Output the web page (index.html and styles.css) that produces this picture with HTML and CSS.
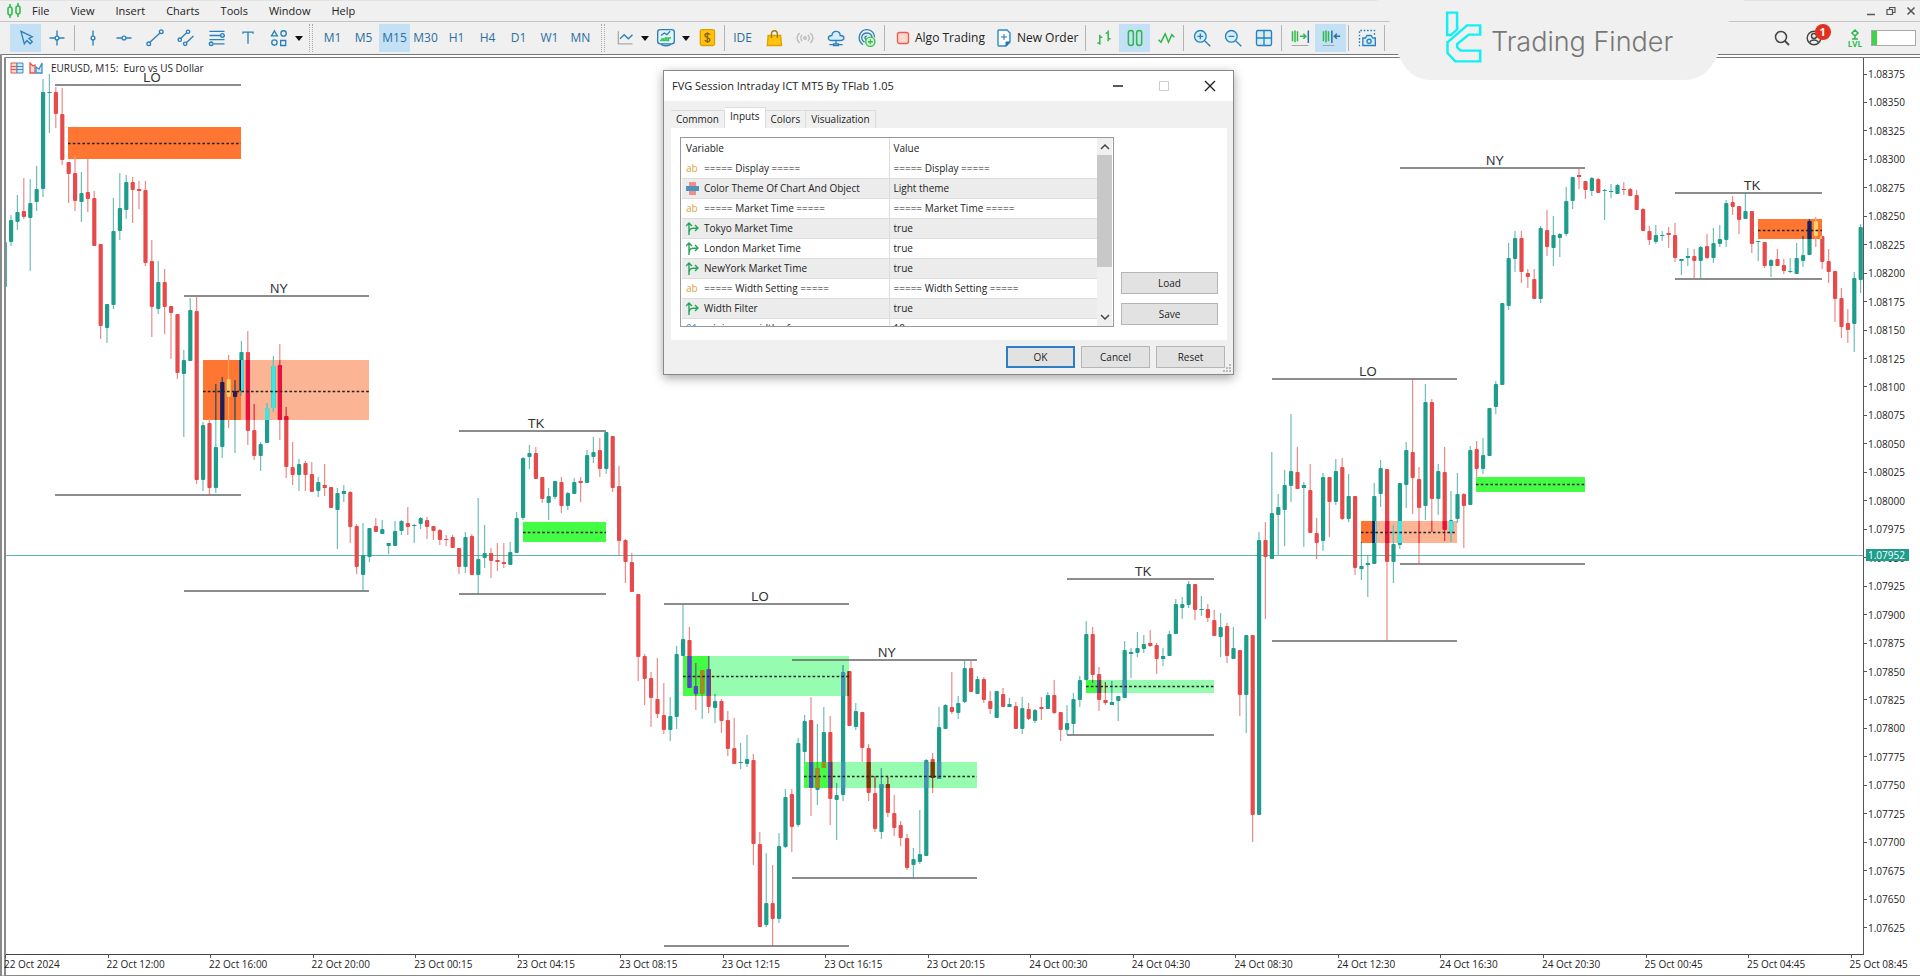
FILE: index.html
```html
<!DOCTYPE html>
<html lang="en">
<head>
<meta charset="utf-8">
<title>EURUSD, M15 - Trading terminal</title>
<link rel="stylesheet" href="styles.css">
</head>
<body>
<header class="top">
  <nav class="menubar">
    <svg class="app-icon" width="16" height="16" viewBox="0 0 16 16"><g fill="none" stroke="#2fc04b" stroke-width="1.6"><path d="M4 1v3M4 12v3M12 0v3M12 11v3"/><rect x="2" y="4" width="4" height="8" rx="2"/><rect x="10" y="3" width="4" height="8" rx="2"/></g></svg>
    <button class="menu">File</button><button class="menu">View</button><button class="menu">Insert</button><button class="menu">Charts</button><button class="menu">Tools</button><button class="menu">Window</button><button class="menu">Help</button>
    <div class="win-controls">
      <button aria-label="Minimize"><svg width="10" height="10" viewBox="0 0 10 10"><path d="M1 8.500h8" stroke="#555" stroke-width="1.500"/></svg></button>
      <button aria-label="Restore"><svg width="10" height="10" viewBox="0 0 10 10"><path d="M1 3.500h5.500v5H1zM3.500 3.500v-2H9v5H6.500" fill="none" stroke="#555" stroke-width="1.200"/></svg></button>
      <button aria-label="Close"><svg width="10" height="10" viewBox="0 0 10 10"><path d="M1.500 1.500l7 7M8.500 1.500l-7 7" stroke="#555" stroke-width="1.500"/></svg></button>
    </div>
  </nav>
  <div class="toolbar">
    <button class="tool on" aria-label="Cursor"><svg class="ic" viewBox="0 0 24 24"><path d="M6 4l4 15 3-4 4 4 2.500-2.500-4-4 4-2z"/></svg></button>
    <button class="tool" aria-label="Crosshair"><svg class="ic" viewBox="0 0 24 24"><path d="M12 3v6.500M12 14.500V21M3 12h6.500M14.500 12H21"/><circle cx="12" cy="12" r="2.300"/></svg></button>
    <span class="sep"></span>
    <button class="tool" aria-label="Vertical line"><svg class="ic" viewBox="0 0 24 24"><path d="M12 3v6.500M12 14.500V21"/><circle cx="12" cy="12" r="2.300"/></svg></button>
    <button class="tool" aria-label="Horizontal line"><svg class="ic" viewBox="0 0 24 24"><path d="M3 12h6.500M14.500 12H21"/><circle cx="12" cy="12" r="2.300"/></svg></button>
    <button class="tool" aria-label="Trendline"><svg class="ic" viewBox="0 0 24 24"><path d="M5.500 17.500L18 6"/><circle cx="4.500" cy="19" r="2.200"/><circle cx="19.500" cy="4.500" r="2.200"/></svg></button>
    <button class="tool" aria-label="Equidistant channel"><svg class="ic" viewBox="0 0 24 24"><path d="M5.500 12.500L13 5.500M12 18l9-8.500"/><circle cx="4.500" cy="14" r="2"/><circle cx="14.500" cy="4.500" r="2"/><circle cx="11" cy="19" r="2"/></svg></button>
    <button class="tool" aria-label="Fibonacci retracement"><svg class="ic" viewBox="0 0 24 24"><path d="M3 4h18M3 9h13M3 14h18M8 19h13"/><circle cx="18.500" cy="9" r="2.200" fill="#b9e2f7"/><circle cx="5" cy="19" r="2.200" fill="#b9e2f7"/></svg></button>
    <button class="tool" aria-label="Text"><svg class="ic" viewBox="0 0 24 24"><path d="M6 7V5h12v2M12 5v14"/></svg></button>
    <button class="tool" aria-label="Shapes"><svg class="ic" viewBox="0 0 24 24"><path d="M3 9.500L6.500 3.500 10 9.500zM14 15h6v6h-6z"/><circle cx="17.500" cy="6.500" r="3.200"/><circle cx="6.500" cy="17.500" r="3.200"/></svg></button>
    <button class="drop" aria-label="More shapes"></button>
    <span class="grip"></span>
    <button class="tool tf">M1</button><button class="tool tf">M5</button><button class="tool tf on">M15</button><button class="tool tf">M30</button><button class="tool tf">H1</button><button class="tool tf">H4</button><button class="tool tf">D1</button><button class="tool tf">W1</button><button class="tool tf">MN</button>
    <span class="grip"></span>
    <button class="tool" aria-label="Line studies"><svg class="ic" viewBox="0 0 24 24"><path d="M4 4v15h17" stroke="#aaa"/><path d="M6 13l5-5 5 5 5-5"/></svg></button>
    <button class="drop" aria-label="Chart types"></button>
    <button class="tool" aria-label="Indicators"><svg class="ic" viewBox="0 0 24 24"><rect x="2" y="2" width="20" height="17" rx="3" fill="#e4f4fc"/><path d="M6 19c2 3 10 3 12 0M6 9l4-3 3 2 4-4"/><path d="M5 15h2v-2h2v2h2v-3h2v3h2v-3h3" stroke="#2fc04b"/></svg></button>
    <button class="drop" aria-label="Indicator list"></button>
    <button class="tool" aria-label="Depth of market"><svg class="ic" viewBox="0 0 24 24"><rect x="4" y="2" width="17" height="19" rx="2" fill="#ffc30f" stroke="#dda000"/><path d="M15.500 8c-1-2-6-2-6 1s6 2 6 5-5 3-6 .5M12.500 5v13" stroke="#8a6500"/></svg></button>
    <span class="sep"></span>
    <button class="tool tf">IDE</button>
    <button class="tool" aria-label="Market"><svg class="ic" viewBox="0 0 24 24"><path d="M5 9h15l1 12H4z" fill="#ffc30f" stroke="#dda000"/><path d="M9 12V7c0-5 7-5 7 0v5" stroke="#a67a00"/></svg></button>
    <button class="tool" aria-label="Signals"><svg class="ic" viewBox="0 0 24 24"><g stroke="#bbb"><circle cx="12" cy="12" r="1.500"/><path d="M8.500 8.500c-2 2-2 5 0 7M15.500 8.500c2 2 2 5 0 7M5.500 6c-4 4-4 8 0 12M18.500 6c4 4 4 8 0 12"/></g></svg></button>
    <button class="tool" aria-label="Cloud hosting"><svg class="ic" viewBox="0 0 24 24"><path d="M7 15c-6 0-5-6 0-6 1-7 10-6 10 0 6 0 6 6 0 6z" fill="#d4effb"/><path d="M12 15v4M4 20h5M14 20h6M9 19h6v2H9z"/></svg></button>
    <button class="tool" aria-label="Copy trading"><svg class="ic" viewBox="0 0 24 24"><path d="M7 20C-1 14 3 2 12 2c6 0 9 5 9 9M9 17c-6-4-3-11 3-11 4 0 6 3 6 5M11 14c-3-2-1-5 1-4"/><circle cx="16" cy="16.500" r="5.500" fill="#d8f8d8" stroke="#2fc04b"/><path d="M16 13.500v6M13 16.500h6" stroke="#2fc04b"/></svg></button>
    <span class="sep"></span>
    <button class="tool wide"><svg width="14" height="16" viewBox="0 0 14 16"><rect x="1.500" y="2.500" width="11" height="11" rx="2" fill="#ffd6d0" stroke="#e5604c" stroke-width="1.400"/></svg>Algo Trading</button>
    <button class="tool wide"><svg width="16" height="20" viewBox="0 0 16 20"><path d="M3 2h8l3 3v9l-4 4H3c-1 0-1-1-1-1V3c0-1 1-1 1-1z" fill="#fff" stroke="#2b8ac9" stroke-width="1.400"/><path d="M8 6v6M5 9h6M10 18v-4h4z" fill="#1c72b4" stroke="#1c72b4"/></svg>New Order</button>
    <span class="sep"></span>
    <button class="tool" aria-label="Bar chart"><svg class="ic green" viewBox="0 0 24 24"><path d="M7 8v12M4 18h3M7 11h3M17 3v13M14 6h3M17 13h3"/></svg></button>
    <button class="tool on" aria-label="Candlesticks"><svg class="ic green" viewBox="0 0 24 24"><rect x="4" y="3" width="6" height="18" rx="3"/><rect x="14" y="3" width="6" height="18" rx="3"/></svg></button>
    <button class="tool" aria-label="Line chart"><svg class="ic green" viewBox="0 0 24 24"><path d="M3 14l3 3 5-10 4 10 4-9 3 3"/></svg></button>
    <span class="sep"></span>
    <button class="tool" aria-label="Zoom in"><svg class="ic" viewBox="0 0 24 24"><circle cx="10" cy="10" r="7" fill="#d4effb"/><path d="M15.500 15.500L22 22M10 6.500v7M6.500 10h7"/></svg></button>
    <button class="tool" aria-label="Zoom out"><svg class="ic" viewBox="0 0 24 24"><circle cx="10" cy="10" r="7" fill="#d4effb"/><path d="M15.500 15.500L22 22M6.500 10h7"/></svg></button>
    <button class="tool" aria-label="Tile windows"><svg class="ic" viewBox="0 0 24 24"><rect x="3" y="3" width="18" height="18" rx="2" fill="#d4effb"/><path d="M12 3v18M3 12h18"/></svg></button>
    <span class="sep"></span>
    <button class="tool" aria-label="Auto scroll"><svg class="ic green" viewBox="0 0 24 24"><path d="M3 4v12M6 3v14M9 4v12M12 10h6M16 7l3 3-3 3"/><path d="M22 3v15" stroke="#2b6fa9"/><path d="M2 21h20" stroke="#999" stroke-width="1"/></svg></button>
    <button class="tool on" aria-label="Chart shift"><svg class="ic green" viewBox="0 0 24 24"><path d="M3 4v12M6 3v14M9 4v12"/><path d="M13 3v15M23 10h-7M19 7l-3 3 3 3" stroke="#2b6fa9"/><path d="M2 21h14" stroke="#999" stroke-width="1"/></svg></button>
    <span class="sep"></span>
    <button class="tool" aria-label="Screenshot"><svg class="ic" viewBox="0 0 24 24"><path d="M3 22V3h18v5" stroke-dasharray="2 2"/><path d="M7 12h3l2-3h5l2 3h3v9H7z" fill="#d4effb"/><circle cx="14.500" cy="16" r="2.500"/></svg></button>
    <span class="sep end"></span>
    <div class="status">
      <button aria-label="Search"><svg width="18" height="18" viewBox="0 0 18 18"><path d="M11.500 11.500L16 16" stroke="#444" stroke-width="1.800"/><circle cx="8" cy="8" r="5.500" fill="none" stroke="#444" stroke-width="1.500"/></svg></button>
      <button class="user" aria-label="Notifications"><svg width="18" height="18" viewBox="0 0 18 18"><g fill="none" stroke="#444" stroke-width="1.400"><circle cx="9" cy="9" r="6.800"/><circle cx="9" cy="7" r="2.500"/><path d="M4.500 14c1-4 8-4 9 0"/></g></svg><span class="badge">1</span></button>
      <span class="lvl"><svg width="10" height="11" viewBox="0 0 10 11"><path d="M5 1l3 3-3 3-3-3zM5 7v3M2 10h6" fill="none" stroke="#2fb84b" stroke-width="1.500"/></svg>LVL</span>
      <span class="battery"></span>
    </div>
  </div>
  <div class="brand">
    <svg class="brand-bg" viewBox="0 0 372 80" preserveAspectRatio="none"><path d="M0 0H372C354 4 354 32 344 54Q333 80 310 80H56Q34 80 24 58C14 38 16 4 0 0z" fill="#f0f0f0"/></svg>
    <svg class="brand-mark" viewBox="236 34 104 156" preserveAspectRatio="none"><path d="M242 108V39H270V88M243 128L298 77H335V105H303L270 133V143L280 153H335V185H265L243 160V124M239 106L252 106L272 88" fill="none" stroke="#12f0f5" stroke-width="7"/></svg>
    <span class="brand-name">Trading Finder</span>
  </div>
</header>

<main class="chart">
  <div class="plot">
    <svg id="candles" viewBox="6 58 1857 896" role="img" aria-label="EURUSD 15 minute candles"></svg>
    <div class="caption">
      <svg width="38" height="12" viewBox="0 0 38 12"><path d="M1 1h6v10H1z" fill="#ffd9d6" stroke="#e5574c"/><path d="M7 1h6v10H7z" fill="#d4ebfa" stroke="#3b8fd0"/><path d="M1 4.500h6M1 7.500h6" stroke="#e5574c"/><path d="M7 4.500h6M7 7.500h6" stroke="#3b8fd0"/><path d="M20 1l3 3 2-1v8h-5z" fill="#ffd9d6" stroke="#e5574c" stroke-width="1.300"/><path d="M26 5l3 2 3-6v10h-6z" fill="#d4ebfa" stroke="#3b8fd0" stroke-width="1.300"/></svg>
      <span>EURUSD, M15:&nbsp; Euro vs US Dollar</span>
    </div>
  </div>
  <div class="prices"><div class="price-list" id="prices"></div><span class="tag">1.07952</span></div>
  <div class="times" id="times"></div>
</main>

<section class="dialog" role="dialog" aria-label="FVG Session Intraday ICT MT5 By TFlab 1.05">
  <div class="titlebar">
    <h1>FVG Session Intraday ICT MT5 By TFlab 1.05</h1>
    <button aria-label="Minimize"><svg width="12" height="12" viewBox="0 0 12 12"><path d="M1 6h10" stroke="#222" stroke-width="1.500"/></svg></button>
    <button aria-label="Maximize" disabled><svg width="12" height="12" viewBox="0 0 12 12"><path d="M1.500 1.500h9v9h-9z" fill="none" stroke="#ccc"/></svg></button>
    <button aria-label="Close"><svg width="12" height="12" viewBox="0 0 12 12"><path d="M1 1l10 10M11 1L1 11" stroke="#222" stroke-width="1.400"/></svg></button>
  </div>
  <div class="tabs"><button>Common</button><button class="active">Inputs</button><button>Colors</button><button>Visualization</button></div>
  <div class="panel">
    <div class="listbox">
      <table>
        <colgroup><col class="c1"><col></colgroup>
        <thead><tr><th>Variable</th><th>Value</th></tr></thead>
        <tbody id="inputs"></tbody>
      </table>
      <div class="scroll">
        <svg width="10" height="8" viewBox="0 0 10 8"><path d="M1 6l4-4 4 4" fill="none" stroke="#444" stroke-width="1.500"/></svg>
        <span class="thumb"></span>
        <svg width="10" height="8" viewBox="0 0 10 8"><path d="M1 2l4 4 4-4" fill="none" stroke="#444" stroke-width="1.500"/></svg>
      </div>
    </div>
    <div class="side"><button class="btn">Load</button><button class="btn">Save</button></div>
  </div>
  <div class="actions"><button class="btn primary">OK</button><button class="btn">Cancel</button><button class="btn">Reset</button></div>
  <svg class="sizer" width="10" height="10" viewBox="0 0 10 10"><path d="M7 1h2v2H7zM7 4h2v2H7zM4 4h2v2H4zM7 7h2v2H7zM4 7h2v2H4zM1 7h2v2H1z" fill="#bbb"/></svg>
</section>
<script src="chart.js"></script>
</body>
</html>
```
FILE: styles.css
```css
* { box-sizing: border-box; }
body {
  margin: 0;
  min-height: 100vh;
  display: flex;
  flex-direction: column;
  position: relative;
  background: #f0f0f0;
  font: 11px/14px "Open Sans", "Noto Sans", sans-serif;
  color: #222;
  overflow-x: hidden;
}
button {
  font: inherit;
  color: inherit;
  border: 0;
  background: none;
  padding: 0;
  margin: 0;
}
svg { display: block; flex: none; }

.top { position: relative; flex: none; }
.menubar {
  display: flex;
  align-items: center;
  height: 22px;
  padding: 0 4px 0 6px;
  border-top: 1px solid #e2e2e2;
  border-bottom: 1px solid #c4c4c4;
}
.app-icon { margin-right: 10px; }
.menu { margin-right: 21px; }
.win-controls { margin-left: auto; display: flex; gap: 10px; }

.toolbar {
  display: flex;
  align-items: center;
  height: 32px;
  padding: 0 4px 0 10px;
}
.tool {
  width: 31px;
  height: 28px;
  flex: none;
  display: flex;
  align-items: center;
  justify-content: center;
}
.tool.on { background: #c3e0f5; }
.tool.tf { color: #2a6f9f; font-size: 12px; }
.tool.wide { width: auto; padding: 0 5px 0 9px; gap: 5px; font-size: 12px; }
.tool.wide + .tool.wide { padding-left: 6px; }
.ic {
  width: 20px;
  height: 20px;
  fill: none;
  stroke: #2b80b9;
  stroke-width: 1.6;
}
.ic.green { stroke: #2fb84b; stroke-width: 1.8; }
.drop { width: 10px; height: 28px; flex: none; }
.drop::before {
  content: "";
  display: block;
  margin: 0 auto;
  width: 0;
  border: 4px solid transparent;
  border-top: 5px solid #111;
  border-bottom: 0;
}
.sep { width: 1px; height: 26px; margin: 0 2px; background: #b4b4b4; flex: none; }
.grip {
  width: 4px;
  height: 28px;
  margin: 0 4px 0 5px;
  flex: none;
  border-left: 1px dotted #aaa;
  border-right: 1px dotted #aaa;
}
.status { margin-left: auto; display: flex; align-items: center; gap: 14px; }
.user { position: relative; margin-right: 11px; }
.badge {
  position: absolute;
  left: 10px;
  top: -5px;
  width: 16px;
  height: 16px;
  border-radius: 50%;
  background: #e1301e;
  color: #fff;
  font-weight: 700;
  line-height: 16px;
  text-align: center;
}
.lvl {
  display: flex;
  flex-direction: column;
  align-items: center;
  color: #2fb84b;
  font-size: 8px;
  line-height: 8px;
  font-weight: 700;
}
.battery {
  width: 45px;
  height: 16px;
  margin-left: -5px;
  border: 1px solid #a8a8a8;
  background: linear-gradient(to right, #3fd24a 5px, #fff 5px);
}
.brand {
  position: absolute;
  top: 0;
  right: 174px;
  width: 370px;
  height: 80px;
  display: flex;
  align-items: center;
  padding: 0 0 6px 69px;
  gap: 9px;
  z-index: 2;
}
.brand-bg { position: absolute; left: 0; top: 0; width: 100%; height: 100%; }
.brand-mark { position: relative; width: 37px; height: 52px; }
.brand-name {
  position: relative;
  font: 300 27px/32px Inter, Roboto, sans-serif;
  color: #777;
  white-space: nowrap;
  padding-top: 10px;
}

.chart {
  flex: 1;
  display: grid;
  grid-template-columns: 1fr 56px;
  grid-template-rows: auto 1fr;
  background: #fff;
  border-top: 4px double #777;
  border-left: 6px double #8a8a8a;
  border-bottom: 1px solid #888;
}
.plot { position: relative; border-right: 1px solid #555; border-bottom: 1px solid #444; }
#candles { width: 100%; height: auto; }
.caption {
  position: absolute;
  left: 4px;
  top: 3px;
  display: flex;
  align-items: center;
  gap: 3px;
  font-size: 10px;
}
.prices { position: relative; font-size: 10px; line-height: 12px; }
.price-list {
  height: 100%;
  display: flex;
  flex-direction: column;
  justify-content: space-between;
  padding: 10px 0 21px;
}
.price-list span { display: flex; align-items: center; gap: 1px; }
.price-list span::before { content: ""; width: 3px; height: 1px; background: #555; }
.tag {
  position: absolute;
  left: 2px;
  top: 491px;
  width: 43px;
  padding: 0 2px;
  background: #1f9d8c;
  color: #fff;
}
.times {
  grid-column: 1 / 3;
  display: flex;
  margin: 0 56px 0 -2px;
  font-size: 10px;
  line-height: 12px;
}
.times span {
  flex: 0 0 calc(100% / 18.14);
  white-space: nowrap;
}
.times span::before { content: ""; display: block; width: 1px; height: 3px; margin-left: 1px; background: #555; }

.bull { fill: #1f9d8c; }
.bear { fill: #e54b4b; }
.wick { opacity: .65; }
.session { stroke: #666; stroke-width: 1.5; }
.session-name { font: 13px "Liberation Sans", Arial, sans-serif; fill: #333; text-anchor: middle; }
.mid { stroke: #222; stroke-width: 1.5; stroke-dasharray: 2.6 2.2; }
.bid { stroke: #58bba4; stroke-width: 1; }

.dialog {
  position: absolute;
  left: 663px;
  top: 70px;
  width: 571px;
  background: #f0f0f0;
  border: 1px solid #888;
  box-shadow: 0 3px 10px rgba(0, 0, 0, .35);
  display: flex;
  flex-direction: column;
  z-index: 3;
}
.titlebar { display: flex; align-items: center; height: 30px; padding: 0 0 1px 8px; background: #fff; }
.titlebar h1 { margin: 0; font-size: 11px; font-weight: 400; flex: 1; }
.titlebar button { width: 46px; display: flex; justify-content: center; }
.tabs { display: flex; align-items: flex-end; padding: 6px 7px 0; height: 27px; font-size: 10px; }
.tabs button { height: 18px; padding: 0 5px 2px; border: 1px solid #dcdcdc; border-bottom: 0; border-left: 0; }
.tabs .active { height: 21px; background: #fff; padding-bottom: 4px; }
.panel { margin: 0 6px 0 7px; height: 212px; background: #fff; padding: 9px; display: flex; gap: 7px; font-size: 10px; }
.listbox { width: 434px; height: 190px; border: 1px solid #999; display: flex; overflow: hidden; padding: 0 1px; }
table { flex: 1; border-collapse: collapse; table-layout: fixed; height: max-content; }
.c1 { width: 207px; }
th, td { height: 20px; padding: 0 4px; text-align: left; font-weight: 400; border-bottom: 1px solid #ddd; white-space: nowrap; line-height: 14px; }
th { border: 0; }
td:first-child, th:first-child { border-right: 1px solid #ddd; }
tbody tr:nth-child(even) { background: #ececec; }
.name { display: flex; align-items: center; gap: 5px; }
.name svg { width: 13px; height: 13px; }
.ab { width: 13px; color: #d9a441; }
.no { width: 13px; color: #3b8fd0; }
.scroll { width: 15px; background: #f0f0f0; display: flex; flex-direction: column; align-items: center; padding: 5px 0; }
.thumb { width: 15px; height: 112px; margin: 4px 0 auto; background: #c8c8c8; }
.side { flex: 1; display: flex; flex-direction: column; justify-content: flex-end; gap: 9px; padding-bottom: 6px; }
.btn { height: 22px; width: 97px; border: 1px solid #b5b5b5; background: #e2e2e2; font-size: 10px; }
.actions { display: flex; justify-content: flex-end; gap: 6px; padding: 6px 8px; }
.actions .btn { width: 69px; }
.btn.primary { border: 2px solid #2c7fc4; }
.sizer { position: absolute; right: 1px; bottom: 1px; }
```
FILE: chart.js
```js
const SVG = "http://www.w3.org/2000/svg";
const svg = document.getElementById("candles");

function add(parent, name, attrs, text) {
  const el = document.createElementNS(SVG, name);
  for (const k in attrs) el.setAttribute(k, attrs[k]);
  if (text) el.textContent = text;
  parent.appendChild(el);
  return el;
}

/* one candle each: direction, high, body top, body bottom, low */
const candles = `g 242 242 287 287|g 215 220 242 246|g 195 212 222 230|r 178 211 217 219|g 179 203 218 271|g 166 189 202 211|g 79 92 189 197|g 74 92 93 133|r 87 92 114 128|r 88 114 160 165
r 162 162 174 203|r 155 173 201 211|g 172 193 202 222|r 159 192 199 212|r 191 198 246 246|r 244 244 326 339|g 304 304 328 343|g 198 231 305 309|g 173 208 231 240|g 175 182 210 219
r 177 182 190 223|r 181 189 191 209|r 181 190 263 266|r 240 261 307 337|g 261 282 309 314|r 269 282 307 334|r 306 306 313 359|r 314 314 373 379|g 350 360 374 437|g 298 310 361 361
r 297 311 480 484|g 422 425 480 491|r 418 423 488 495|g 384 447 488 493|g 377 382 447 458|r 355 379 397 428|g 380 391 397 453|g 341 352 391 396|r 331 352 431 445|r 404 430 456 460
g 442 444 456 471|g 403 408 443 443|g 356 366 408 412|r 344 365 420 440|r 407 416 467 478|r 442 467 475 485|g 459 464 475 491|r 461 463 475 491|r 462 474 492 492|g 477 482 491 497
r 464 485 488 496|r 487 487 508 508|g 488 493 510 549|g 485 491 494 502|r 491 492 527 543|r 524 526 567 574|g 523 555 575 591|g 528 528 557 562|r 518 526 532 532|g 520 529 534 534
g 543 543 546 554|g 521 531 546 546|g 520 521 531 535|r 507 523 527 535|g 524 525 526 543|g 517 518 524 529|r 517 520 527 539|r 526 526 531 540|r 529 530 540 545|r 535 539 540 546
r 535 537 548 548|r 548 548 567 574|g 532 537 567 573|r 534 536 575 575|g 498 559 575 594|g 525 553 558 568|r 548 553 561 578|r 543 560 562 571|r 543 562 564 568|g 542 552 565 565
g 512 518 553 553|g 457 458 518 520|g 445 453 457 469|r 447 453 479 479|r 477 477 499 503|g 488 496 503 520|g 481 481 497 499|r 477 482 506 513|g 492 493 506 510|g 478 482 494 494
r 477 481 483 502|g 450 455 483 483|g 437 452 457 463|r 438 450 469 477|g 432 432 469 474|r 436 436 488 492|r 466 486 541 556|r 539 540 562 583|r 553 562 592 592|r 594 594 657 681
r 654 656 679 705|r 672 678 698 727|r 658 699 714 718|r 683 715 730 734|g 697 716 730 741|g 646 654 717 729|g 604 639 656 656|r 627 640 688 688|r 663 686 694 710|g 670 670 694 719
r 656 669 707 713|g 694 701 708 723|r 699 701 721 733|r 711 720 749 756|r 718 748 764 764|g 743 762 763 769|g 735 759 764 767|r 754 760 844 865|r 832 844 927 927|g 853 903 925 927
r 865 903 919 946|g 833 846 919 923|g 789 797 847 848|r 789 794 827 852|g 738 743 825 827|g 715 721 752 762|r 697 720 788 816|g 724 768 790 805|g 707 732 768 768|r 716 732 799 825
g 783 795 800 840|g 665 672 795 801|r 671 671 726 726|g 703 711 727 730|r 712 712 748 762|r 744 748 793 801|r 776 793 829 832|g 768 784 832 839|r 777 784 813 817|r 795 813 828 836
r 821 825 838 846|r 834 838 868 870|g 848 859 865 878|g 810 854 862 864|g 759 760 856 856|r 753 759 778 793|g 707 727 779 779|g 704 705 729 729|r 672 707 712 714|g 696 703 713 719
g 661 668 702 703|r 661 668 692 692|g 676 679 694 694|r 677 679 700 703|r 691 701 709 714|g 691 691 718 718|r 688 694 707 707|g 698 704 707 707|r 702 706 729 729|g 697 708 729 734
r 703 709 719 720|g 709 710 721 723|r 697 707 709 720|g 692 695 709 709|r 680 695 713 714|r 712 712 730 741|g 705 723 730 735|g 693 699 724 735|g 676 680 700 707|g 621 634 680 680
r 627 634 675 683|r 667 674 700 711|r 682 700 703 705|g 681 702 705 705|g 696 696 701 721|g 641 650 698 698|g 648 652 654 678|g 632 648 653 657|g 635 644 649 653|r 630 643 646 647
r 643 645 659 674|g 648 656 659 666|g 631 634 656 656|g 599 604 634 634|g 597 604 608 619|g 581 584 605 608|r 584 584 610 620|g 596 609 610 616|r 604 609 618 622|r 610 620 636 636
g 613 627 637 657|r 623 626 656 663|g 627 648 659 659|r 650 650 695 716|g 635 635 695 733|r 635 635 815 842|g 532 540 815 815|r 522 540 557 619|g 452 513 559 559|g 494 507 515 555
g 470 485 510 546|g 414 471 486 502|r 447 472 489 489|g 482 485 488 547|r 464 490 533 533|r 518 533 543 559|g 473 477 541 551|r 477 477 502 537|g 459 471 502 505|r 458 467 519 520
g 474 496 519 522|r 496 496 568 575|g 542 566 569 580|g 555 563 565 597|g 483 496 564 564|g 460 468 494 507|r 469 469 562 641|g 525 544 562 583|g 483 483 545 549|g 442 450 485 508
r 379 452 478 514|r 467 479 508 564|g 384 402 506 520|r 399 402 499 532|g 464 471 499 515|r 447 472 530 541|g 491 520 532 542|g 473 494 519 523|r 493 494 506 548|g 446 450 505 505
r 441 449 469 477|g 438 455 469 474|g 408 408 456 456|g 381 384 407 414|g 303 303 385 385|g 243 258 306 310|g 231 238 259 272|r 231 238 272 283|r 269 273 277 288|r 269 279 299 299
g 226 228 299 303|r 210 230 247 256|g 216 235 248 266|g 233 234 238 257|g 187 201 234 236|g 177 177 201 209|r 169 175 177 189|r 181 181 190 199|g 177 178 191 196|r 178 179 193 193
g 189 190 191 220|g 184 191 192 198|g 184 185 194 194|r 182 189 190 195|r 188 189 196 196|r 190 195 210 210|r 208 209 231 231|r 226 231 240 245|g 225 235 242 244|g 231 235 236 241
r 227 233 235 248|r 223 235 258 262|g 259 259 261 275|g 248 256 258 266|r 249 256 261 278|g 246 247 261 278|r 234 246 258 259|g 228 243 258 263|g 225 239 244 247|g 200 203 240 247
r 196 202 207 215|r 206 206 220 234|g 193 211 219 219|r 211 211 244 253|g 241 241 242 261|r 242 242 266 268|g 259 260 266 277|r 249 259 266 266|r 259 265 271 274|g 258 271 272 273
g 243 258 274 274|g 236 255 261 267|g 219 221 255 255|r 217 221 236 247|r 236 236 262 269|r 249 261 272 283|r 271 271 299 322|r 288 298 327 338|r 309 323 330 343|g 272 278 324 352|g 224 227 280 293`
  .split(/[|\n]/).map((row, i) => {
    const [dir, ...y] = row.trim().split(" ");
    const [high, top, bottom, low] = y.map(Number);
    return { x: 4.6 + 6.4 * i, up: dir === "g", high, top, bottom, low };
  });

function drawCandle(parent, c, fill) {
  const paint = fill ? { style: "fill:" + fill } : {};
  const cls = c.up ? "bull" : "bear";
  add(parent, "rect", { class: cls + " wick", x: c.x - 0.6, y: c.high, width: 1.2, height: c.low - c.high, ...paint });
  add(parent, "rect", { class: cls, x: c.x - 2, y: c.top, width: 4.2, height: Math.max(1, c.bottom - c.top), rx: c.bottom - c.top > 3 ? 1 : 0, ...paint });
}

/* gap zones: x1, x2, y1, y2, tone */
const tones = {
  orange: { fill: "#ff7632", up: "#261b57", down: "#ffcf6a" },
  peach: { fill: "#fbb594", up: "#40e4e2", down: "#e8103c" },
  green: { fill: "#44fc44", up: "#a88a20", down: "#4c48cc" },
  mint: { fill: "#96fcb0", up: "#4691b8", down: "#7c3808" }
};
const zones = [
  [68, 241, 127, 159, "orange"], [203, 241, 360, 420, "orange"], [241, 369, 360, 420, "peach"],
  [523, 606, 522, 542, "green"], [683, 710, 656, 696, "green"], [710, 849, 656, 696, "mint"],
  [804, 831, 762, 788, "green"], [831, 977, 762, 788, "mint"], [1086, 1099, 680, 693, "green"],
  [1099, 1214, 680, 693, "mint"], [1361, 1375, 521, 543, "orange"], [1375, 1457, 521, 543, "peach"],
  [1476, 1585, 477, 492, "green"], [1758, 1822, 219, 239, "orange"]
];
const mids = [[68, 241, 143], [203, 369, 391], [523, 606, 532], [683, 849, 676], [804, 977, 776],
  [1086, 1214, 686], [1361, 1457, 532], [1476, 1585, 484], [1758, 1822, 230]];
/* sessions: name, label x, x1, x2, high, low */
const sessions = [
  ["LO", 152, 55, 241, 85, 495], ["NY", 279, 184, 369, 296, 591], ["TK", 536, 459, 606, 431, 594],
  ["LO", 760, 664, 849, 604, 946], ["NY", 887, 792, 977, 660, 878], ["TK", 1143, 1067, 1214, 579, 735],
  ["LO", 1368, 1272, 1457, 379, 641], ["NY", 1495, 1400, 1585, 168, 564], ["TK", 1752, 1675, 1822, 193, 279]
];

add(svg, "line", { class: "bid", x1: 6, x2: 1864, y1: 555.5, y2: 555.5 });
for (const [x1, x2, y1, y2, tone] of zones)
  add(svg, "rect", { x: x1, y: y1, width: x2 - x1, height: y2 - y1, fill: tones[tone].fill });
for (const [name, lx, x1, x2, high, low] of sessions) {
  if (name !== "NY" || x1 !== 1400 || high) {
    add(svg, "line", { class: "session", x1, x2, y1: high, y2: high });
    add(svg, "line", { class: "session", x1, x2, y1: low, y2: low });
  }
  add(svg, "text", { class: "session-name", x: lx, y: high - 3 }, name);
}
candles.forEach(c => drawCandle(svg, c));
zones.forEach(([x1, x2, y1, y2, tone], i) => {
  const clip = add(svg, "clipPath", { id: "zone" + i });
  add(clip, "rect", { x: x1, y: y1, width: x2 - x1, height: y2 - y1 });
  const g = add(svg, "g", { "clip-path": `url(#zone${i})` });
  candles.filter(c => c.x > x1 - 3 && c.x < x2 + 3 && c.low > y1 && c.high < y2)
    .forEach(c => drawCandle(g, c, c.up ? tones[tone].up : tones[tone].down));
});
for (const [x1, x2, y] of mids)
  add(svg, "line", { class: "mid", x1, x2, y1: y + 0.5, y2: y + 0.5 });

const prices = document.getElementById("prices");
for (let p = 108375; p >= 107625; p -= 25) {
  const s = document.createElement("span");
  s.textContent = (p / 100000).toFixed(5);
  prices.appendChild(s);
}

const times = document.getElementById("times");
["22 Oct 2024", "22 Oct 12:00", "22 Oct 16:00", "22 Oct 20:00", "23 Oct 00:15", "23 Oct 04:15", "23 Oct 08:15",
  "23 Oct 12:15", "23 Oct 16:15", "23 Oct 20:15", "24 Oct 00:30", "24 Oct 04:30", "24 Oct 08:30", "24 Oct 12:30",
  "24 Oct 16:30", "24 Oct 20:30", "25 Oct 00:45", "25 Oct 04:45", "25 Oct 08:45"].forEach(t => {
  const s = document.createElement("span");
  s.textContent = t;
  times.appendChild(s);
});

const icons = {
  text: '<span class="ab">ab</span>',
  number: '<span class="no">01</span>',
  list: '<svg viewBox="0 0 13 13"><path d="M3 0h7v13H3z" fill="#ee8f8f"/><path d="M0 4h13v5H0z" fill="#4f93bd"/></svg>',
  bool: '<svg viewBox="0 0 13 13"><path d="M3 13V2M0 4l3-3 3 3M3 11c0-5 3-5 9-5M9 3l3 3-3 3" fill="none" stroke="#25a55a" stroke-width="1.400"/></svg>'
};
const inputs = document.getElementById("inputs");
[["text", "===== Display =====", "===== Display ====="],
  ["list", "Color Theme Of Chart And Object", "Light theme"],
  ["text", "===== Market Time =====", "===== Market Time ====="],
  ["bool", "Tokyo Market Time", "true"],
  ["bool", "London Market Time", "true"],
  ["bool", "NewYork Market Time", "true"],
  ["text", "===== Width Setting =====", "===== Width Setting ====="],
  ["bool", "Width Filter", "true"],
  ["number", "minimum width of gap", "10"]].forEach(([type, name, value]) => {
  inputs.insertAdjacentHTML("beforeend",
    `<tr><td><div class="name">${icons[type]}<span>${name}</span></div></td><td>${value}</td></tr>`);
});
```
